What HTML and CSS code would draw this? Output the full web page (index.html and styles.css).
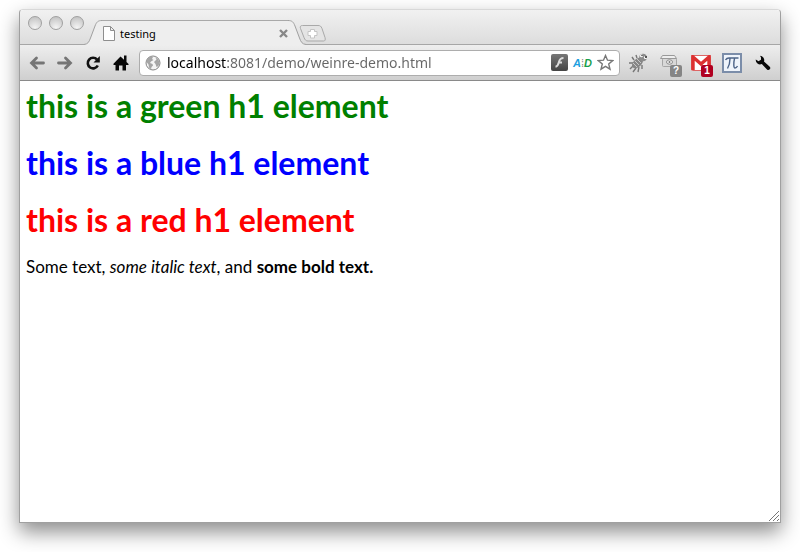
FILE: index.html
```html
<!DOCTYPE html>
<html lang="en">
<head>
<meta charset="utf-8">
<title>testing</title>
<link rel="stylesheet" href="styles.css">
</head>
<body>
<div class="window">
  <header class="strip">
    <div class="lights">
      <button class="light" aria-label="Close window"></button>
      <button class="light" aria-label="Minimize window"></button>
      <button class="light" aria-label="Zoom window"></button>
    </div>
    <div class="tab">
      <svg class="edge" width="18" height="25" viewBox="0 0 18 25" aria-hidden="true"><path class="edge-fill" d="M0 25V24.5C4 24 5 22 6.500 18L11 6C12.500 2 14 .5 18 .5V25Z"/><path class="edge-line" d="M0 24.500C4 24 5 22 6.500 18L11 6C12.500 2 14 .5 18 .5"/></svg>
      <div class="tab-body">
        <svg width="14" height="15" viewBox="0 0 14 15" aria-hidden="true"><path d="M1.500 .5H8.500L12.500 4.500V14.500H1.500ZM8.500 .5V4.500H12.500" fill="#fff" stroke="#8e8e8e"/></svg>
        <span class="tab-title">testing</span>
        <button class="tab-close" aria-label="Close tab"><svg width="9" height="9" viewBox="0 0 9 9"><path d="M1 1L8 8M8 1L1 8" stroke="#888" stroke-width="2.400"/></svg></button>
      </div>
      <svg class="edge" width="18" height="25" viewBox="0 0 18 25" aria-hidden="true"><path class="edge-fill" d="M18 25V24.5C14 24 13 22 11.500 18L7 6C5.500 2 4 .5 0 .5V25Z"/><path class="edge-line" d="M18 24.500C14 24 13 22 11.500 18L7 6C5.500 2 4 .5 0 .5"/></svg>
    </div>
    <button class="new-tab" aria-label="New tab"><svg width="28" height="17" viewBox="0 0 28 17"><path d="M3.500 .5H19C21 .5 22 1 23 3.500L26 12.500C26.700 15 26 16 24.500 16H9C7 16 6 15 5 12.500L1.500 3.500C.8 1.500 1.500 .5 3.500 .5Z" fill="#e4e4e4" stroke="#a9a9a9"/><path d="M11.500 4.500H15.500V6.500H18V10.500H15.500V13H11.500V10.500H9V6.500H11.500Z" fill="#fff" stroke="#c4c4c4"/></svg></button>
  </header>

  <nav class="toolbar">
    <button class="nav" aria-label="Back"><svg width="16" height="16" viewBox="0 0 16 16"><path d="M14.500 8H3M7.500 3L2.500 8L7.500 13" fill="none" stroke="#757575" stroke-width="2.800" stroke-linecap="round"/></svg></button>
    <button class="nav" aria-label="Forward"><svg width="16" height="16" viewBox="0 0 16 16"><path d="M1.500 8H13M8.500 3L13.500 8L8.500 13" fill="none" stroke="#757575" stroke-width="2.800" stroke-linecap="round"/></svg></button>
    <button class="nav" aria-label="Reload"><svg width="16" height="16" viewBox="0 0 16 16"><path d="M12.800 10.500A5.300 5.300 0 1 1 12 4.500" fill="none" stroke="#111" stroke-width="2.600"/><path d="M14.800 1V7.500H8.500Z" fill="#111"/></svg></button>
    <button class="nav home" aria-label="Home"><svg width="16" height="16" viewBox="0 0 16 16"><path d="M7.500 1.500L11 4.800V.5H13.500V7L15.500 9V10H13V15.500H9.500V10.500H6V15.500H2.500V10H.5V8.800Z" fill="#080808"/></svg></button>

    <div class="omnibox">
      <svg width="16" height="16" viewBox="0 0 16 16" aria-hidden="true"><circle cx="8" cy="8" r="7" fill="#f4f4f4" stroke="#848484"/><path d="M2 4L5 1.500L8 2L7 4L8.500 5L6 6.500L5 8L7.500 9L8 10.500L6.500 12L6 14.500L4 12.500L3.500 9.500L1.500 7ZM10 2L13.500 4.500L14.500 8L13.500 11L11.500 12L10.500 9L9 7L10.500 5.500L11.500 4.500Z" fill="#a5a5a5"/></svg>
      <input class="url" type="text" aria-label="Address" value="localhost:8081/demo/weinre-demo.html">
      <button class="page-action" aria-label="Flash"><svg width="17" height="17" viewBox="0 0 17 17"><defs><linearGradient id="fl" x2="0" y2="1"><stop stop-color="#777"/><stop offset="1" stop-color="#444"/></linearGradient></defs><rect width="17" height="17" rx="2" fill="url(#fl)"/><path d="M12.500 4C9 4 8.500 6 7.800 8.500S6.500 12.500 4.500 12.800M7 8.500H11" fill="none" stroke="#ddd" stroke-width="2"/></svg></button>
      <button class="page-action aid"><i class="a">A</i><span class="mid">⁞</span><i class="d">D</i></button>
      <button class="page-action" aria-label="Bookmark"><svg width="17" height="17" viewBox="0 0 17 17"><path d="M8.500 1.500L10.500 6.200L15.700 6.600L11.700 10L13 15.200L8.500 12.400L4 15.200L5.300 10L1.300 6.600L6.500 6.200Z" fill="#fff" stroke="#777" stroke-width="1.400"/></svg></button>
    </div>

    <button class="ext" aria-label="Debugger"><svg width="22" height="22" viewBox="0 0 22 22"><path d="M5 11L1 11M5 14L2 17M8 16L5 20M11 15L10 20M14 13L14 17M6 8L4 5M9 6L8 3" stroke="#777" stroke-width="1.400"/><ellipse cx="9.500" cy="11" rx="6.500" ry="4" transform="rotate(-42 9.500 11)" fill="#868686"/><path d="M5 11L9 15M7 9L11 13M9 7L13 11" stroke="#c8c8c8"/><circle cx="15" cy="5.500" r="3.800" fill="#8c8c8c"/><circle cx="13.500" cy="3.800" r="1.500" fill="#fff"/><circle cx="17.500" cy="5.500" r="1.600" fill="#fff"/><circle cx="18" cy="5" r="1" fill="#222"/><circle cx="14" cy="3.500" r=".7" fill="#222"/></svg></button>
    <button class="ext" aria-label="Window tools"><svg width="22" height="22" viewBox="0 0 22 22"><rect x="3.500" y="6.500" width="14" height="8" rx="1" fill="#d8d8d8" stroke="#a5a5a5"/><path d="M3.500 3.500H15.500L17.500 6.500H1.500Z" fill="#eee" stroke="#999"/><ellipse cx="10.500" cy="10" rx="3" ry="2.200" fill="#f4f4f4" stroke="#888"/><circle cx="10.500" cy="10" r="1" fill="#777"/></svg><span class="badge gray">?</span></button>
    <button class="ext" aria-label="Mail"><svg width="20" height="16" viewBox="0 0 20 16"><rect x=".5" y=".5" width="19" height="15" rx="1" fill="#fff" stroke="#d66"/><path d="M2 15V2L10 9L18 2V15" fill="none" stroke="#dc3030" stroke-width="3.400"/></svg><span class="badge red">1</span></button>
    <button class="ext" aria-label="Pi"><svg width="20" height="20" viewBox="0 0 20 20"><rect x="1" y="1" width="18" height="18" fill="#eff4fb" stroke="#7b8da9" stroke-width="2"/><path d="M3.500 7C5 4.500 6 5 8 5H16.500M8 5.500C8 9 7 13 5.500 15.500M12.500 5.500C11.500 10 11.500 15 13 15S15 14 15.500 13" fill="none" stroke="#4d6488" stroke-width="1.400"/></svg></button>
    <button class="ext" aria-label="Menu"><svg width="16" height="16" viewBox="0 0 16 16"><path d="M5 .8A4.300 4.300 0 0 1 9 6.500L14.500 11.500A1.800 1.800 0 0 1 12 14.500L6.800 9A4.300 4.300 0 0 1 .8 4.500L3.500 6.200L6 4.800V2.500Z" fill="#080808"/></svg></button>
  </nav>

  <main class="page">
    <h1 class="green">this is a green h1 element</h1>
    <h1 class="blue">this is a blue h1 element</h1>
    <h1 class="red">this is a red h1 element</h1>
    <p>Some text, <i>some italic text</i>, and <b>some bold text.</b></p>
    <svg class="grip" width="12" height="12" viewBox="0 0 12 12" aria-hidden="true"><path d="M1 11L11 1M5 11L11 5M9 11L11 9" stroke="#777"/></svg>
  </main>
</div>
</body>
</html>
```

FILE: styles.css
```css
* { box-sizing: border-box; }
body { margin: 0; background: #fff; }
button { border: 0; padding: 0; margin: 0; background: none; display: flex; align-items: center; justify-content: center; position: relative; }
svg { display: block; flex: none; }

.window {
  display: flex;
  flex-direction: column;
  min-height: calc(100vh - 38px);
  margin: 9px 19px 29px;
  border: 1px solid #a0a0a0;
  border-top-color: #d8d8d8;
  border-radius: 4px 4px 0 0;
  box-shadow: 0 9px 20px rgba(0, 0, 0, .45);
}

.strip {
  display: flex;
  align-items: flex-end;
  height: 35px;
  padding-left: 8px;
  background: linear-gradient(#f1f1f1, #dcdcdc);
  box-shadow: inset 0 -1px #a6a6a6;
  border-radius: 4px 4px 0 0;
}
.lights { display: flex; gap: 7px; align-self: flex-start; padding-top: 6px; }
.light {
  width: 14px;
  height: 14px;
  border: 1px solid #a0a0a0;
  border-radius: 50%;
  background: radial-gradient(circle at 50% 90%, #f5f5f5, #d4d4d4 60%, #bcbcbc);
}
.tab { display: flex; height: 25px; width: 222px; }
.edge-fill { fill: #eee; }
.edge-line { fill: none; stroke: #a0a0a0; }
.tab-body {
  flex: 1;
  display: flex;
  align-items: center;
  gap: 4px;
  border-top: 1px solid #a9a9a9;
  background: #eee;
}
.tab-title { flex: 1; font: 11px/15px "Noto Sans", sans-serif; color: #000; }
.tab-close { width: 9px; height: 15px; }
.new-tab { align-self: center; margin-top: 12px; margin-left: -7px; }

.toolbar {
  display: flex;
  align-items: center;
  height: 36px;
  padding: 0 2px 0 3px;
  background: linear-gradient(#eee, #cfcfcf);
  border-bottom: 1px solid #8a8a8a;
}
.nav { width: 28px; height: 28px; }
.omnibox {
  flex: 1;
  display: flex;
  align-items: center;
  gap: 5px;
  height: 26px;
  margin: 0 3px 0 4px;
  padding: 0 5px;
  border: 1px solid #adadad;
  border-radius: 4px;
  background: #fff;
}
.url {
  flex: 1;
  min-width: 0;
  height: 22px;
  padding: 0 0 0 1px;
  border: 0;
  outline: 0;
  font: 14px/22px "Noto Sans", sans-serif;
  color: transparent;
  background: linear-gradient(90deg, #000 60px, #666 60px);
  -webkit-background-clip: text;
  background-clip: text;
}
.page-action { height: 18px; }
.aid { font: bold 11px/18px "Liberation Sans", sans-serif; }
.a { color: #1e9fe0; }
.mid { color: #888; font-weight: normal; }
.d { color: #18a04a; }
.ext { width: 31px; height: 30px; }
.badge {
  position: absolute;
  right: 3px;
  bottom: 1px;
  width: 12px;
  height: 12px;
  border-radius: 2px;
  font: bold 10px/12px "Liberation Sans", sans-serif;
  color: #fff;
  text-align: center;
}
.badge.gray { background: #858585; }
.badge.red { background: #b00020; }

.page {
  flex: 1;
  position: relative;
  padding: 5px 6px;
  background: #fff;
  font: 17px/20px "Century Gothic", "URW Gothic", "Lato", sans-serif;
  color: #000;
}
.page h1 { margin: 0 0 17px; font-size: 32px; line-height: 40px; font-weight: bold; }
.page .green { color: #008000; }
.page .blue { color: #00f; }
.page .red { color: #f00; }
.page p { margin: 0; }
.grip { position: absolute; right: 0; bottom: 0; }
```
